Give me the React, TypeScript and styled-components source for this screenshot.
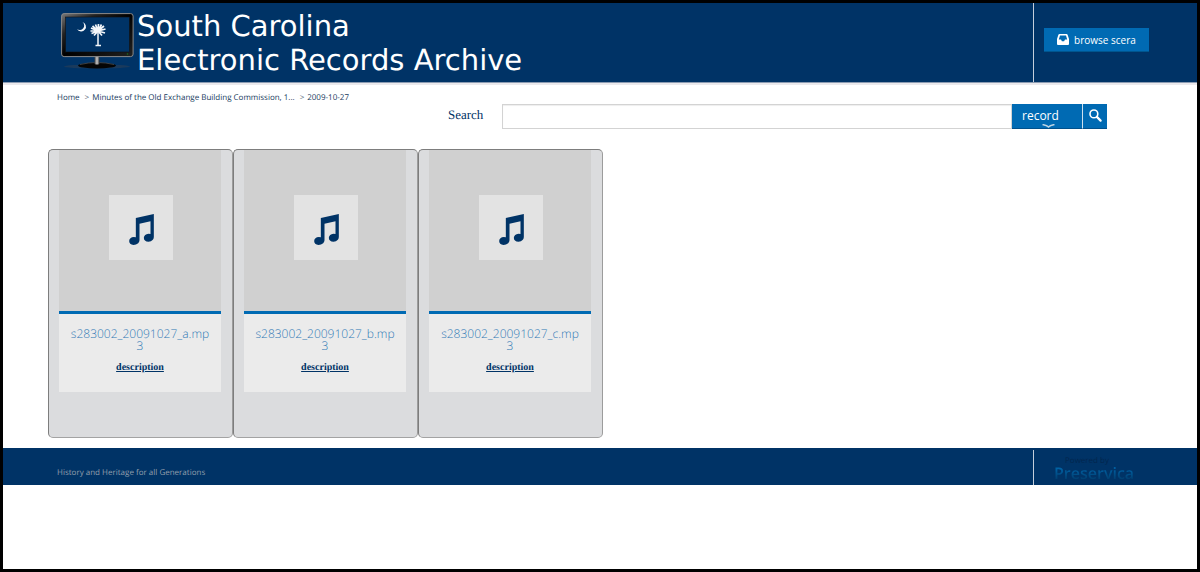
import React from "react";
import styled, { createGlobalStyle } from "styled-components";

const navy = "#003366";
const blue = "#006ab3";
const sans = '"Open Sans", "Noto Sans", sans-serif';
const serif = '"Liberation Serif", serif';

const GlobalStyle = createGlobalStyle`
  * { box-sizing: border-box; }
  body {
    margin: 0;
    background: #fff;
    font-family: ${sans};
    color: ${navy};
    text-rendering: geometricPrecision;
  }
`;

const Page = styled.div`
  min-height: 100vh;
  border: 3px solid #000;
  background: #fff;
`;

const Header = styled.header`
  display: flex;
  height: 80px;
  background: ${navy};
  border-bottom: 1px solid #8c9cb2;
  box-shadow: 0 2px 0 #ebe9ec;
`;

const Brand = styled.a`
  flex: 1;
  display: flex;
  align-items: flex-start;
  gap: 2px;
  padding: 5px 0 0 57px;
  color: #fff;
  text-decoration: none;
`;

const Title = styled.h1`
  margin: 1px 0 0;
  font: 400 29px/34px "DejaVu Sans", sans-serif;
`;

const Side = styled.div`
  width: 164px;
  padding: 25px 0 0 10px;
  border-left: 1px solid #c3cedb;
`;

const BrowseButton = styled.button`
  display: flex;
  align-items: center;
  justify-content: center;
  gap: 5px;
  width: 105px;
  height: 24px;
  padding: 0;
  border: 0;
  border-bottom: 1px solid #00568f;
  background: ${blue};
  color: #fff;
  font: 400 10px/16px ${sans};
`;

const Main = styled.main`
  padding: 9px 90px 10px 45px;
`;

const Toolbar = styled.div`
  display: flex;
  align-items: flex-start;
  padding-left: 9px;
`;

const Crumbs = styled.nav`
  flex: 0 0 391px;
  ol {
    display: flex;
    margin: 0;
    padding: 0;
    list-style: none;
    font-size: 8px;
    line-height: 12px;
    white-space: nowrap;
  }
  li + li::before {
    content: ">";
    margin: 0 3px 0 5px;
    color: #5b6b7d;
  }
  a { color: #16395c; text-decoration: none; }
`;

const SearchForm = styled.form`
  flex: 1;
  display: flex;
  height: 25px;
  margin-top: 12px;
`;

const SearchLabel = styled.label`
  width: 54px;
  font: 400 13px/22px ${serif};
`;

const SearchInput = styled.input`
  flex: 1;
  min-width: 0;
  padding: 0 8px;
  border: 1px solid #d3d3d3;
  border-radius: 0;
  background: #fff;
  box-shadow: inset 0 1px 1px #eee;
  font: 400 12px/16px ${sans};
  outline: 0;
`;

const SelectWrap = styled.div`
  position: relative;
  width: 70px;
  svg { position: absolute; left: 30px; bottom: 1px; pointer-events: none; }
`;

const TypeSelect = styled.select`
  appearance: none;
  display: block;
  width: 100%;
  height: 100%;
  padding: 0 10px;
  border: 0;
  border-radius: 0;
  border-bottom: 1px solid #00508c;
  background: ${blue};
  color: #fff;
  font: 400 12px/20px ${sans};
`;

const SearchButton = styled.button`
  display: flex;
  align-items: center;
  justify-content: center;
  width: 25px;
  padding: 0 0 2px;
  border: 0;
  border-left: 1px solid #cfe0ee;
  border-bottom: 1px solid #00508c;
  background: ${blue};
`;

const Records = styled.ul`
  display: flex;
  flex-wrap: wrap;
  margin: 20px 0 0;
  padding: 0;
  list-style: none;
`;

const Card = styled.li`
  width: 185px;
  height: 289px;
  padding: 0 11px 0 10px;
  border: 1px solid;
  border-color: #7d7d7d #9c9c9c #a3a3a3 #7d7d7d;
  border-radius: 5px;
  background: #dbdcde;
`;

const Preview = styled.div`
  display: flex;
  justify-content: center;
  height: 164px;
  padding: 45px 0 0 2px;
  border-bottom: 3px solid ${blue};
  background: #d0d0d0;
`;

const Tile = styled.div`
  display: flex;
  justify-content: center;
  width: 64px;
  height: 65px;
  padding-top: 19px;
  background: #e3e3e3;
`;

const Details = styled.div`
  display: flex;
  flex-direction: column;
  align-items: center;
  height: 78px;
  padding: 14px 10px 0;
  background: #ebebeb;
  text-align: center;
`;

const RecordLink = styled.a`
  color: #2f79b5;
  font-size: 12px;
  font-weight: 300;
  line-height: 12px;
  text-decoration: none;
  word-break: break-all;
`;

const DescriptionLink = styled.a`
  margin-top: 10px;
  color: ${navy};
  font: 700 10px/12px ${serif};
`;

const Footer = styled.footer`
  display: flex;
  height: 37px;
  background: ${navy};
`;

const Motto = styled.p`
  flex: 1;
  margin: 0;
  padding: 19px 0 0 54px;
  color: #929fac;
  font-size: 8px;
  line-height: 12px;
`;

const Powered = styled.div`
  display: flex;
  flex-direction: column;
  width: 164px;
  margin-top: 2px;
  padding: 8px 0 0 20px;
  border-left: 1px solid #c3cedb;
`;

const PoweredBy = styled.span`
  padding-left: 11px;
  color: #02264e;
  font-size: 8px;
  line-height: 6px;
`;

const Vendor = styled.span`
  align-self: flex-start;
  background: linear-gradient(#0064a8 20%, #003c6c 90%);
  background-clip: text;
  color: transparent;
  font-size: 16px;
  font-weight: 600;
  line-height: 18px;
`;

const MonitorLogo = () => (
  <svg width="75" height="66" viewBox="0 0 75 66" aria-hidden="true">
    <defs>
      <linearGradient id="bezel" x1="0" y1="0" x2="1" y2="1">
        <stop offset="0" stopColor="#777" />
        <stop offset="0.25" stopColor="#222" />
        <stop offset="0.5" stopColor="#000" />
        <stop offset="1" stopColor="#222" />
      </linearGradient>
      <linearGradient id="neck" x1="0" x2="1">
        <stop offset="0" stopColor="#444" />
        <stop offset="0.5" stopColor="#ccc" />
        <stop offset="1" stopColor="#333" />
      </linearGradient>
    </defs>
    <ellipse cx="37" cy="58.5" rx="33" ry="2" fill="#1a3a5c" />
    <ellipse cx="37" cy="57.5" rx="19" ry="3" fill="#050505" />
    <path d="M20 56.500q17 -4 34 0" fill="none" stroke="#555" strokeWidth="0.7" />
    <path d="M34.5 48h5v8q-2.500 1 -5 0z" fill="url(#neck)" />
    <rect x="1.600" y="5.600" width="71.500" height="43" rx="2.500" fill="url(#bezel)" stroke="#8a8a8a" />
    <rect x="5.500" y="9" width="64" height="35" fill={navy} stroke="#111" strokeWidth="0.6" />
    <circle cx="67.500" cy="46" r="0.800" fill="#19701c" />
    <path d="M22.500 14a4.800 4.800 0 1 1 -5.500 7a4.300 4.300 0 0 0 5.500 -7z" fill="#f4f7fa" />
    <g stroke="#f4f7fa" fill="none">
      <path d="M38 22V37M35.500 37.500h5.500" strokeWidth="1.500" />
      <path
        d="M38 23L31 20M38 23L32.500 18M38 23L35.500 16.500M38 23L38.500 16M38 23L41.500 16.500M38 23L44 18M38 23L45.500 21M38 23L45 25M38 23L42 27.500M38 23L34 27.500M38 23L31.500 25.500M38 23L30.500 23"
        strokeWidth="1.700"
      />
    </g>
  </svg>
);

const InboxIcon = () => (
  <svg width="12" height="11" viewBox="0 0 12 11" aria-hidden="true">
    <path
      fillRule="evenodd"
      fill="#fff"
      d="M2.500 0h7q0.800 0 1.100 0.800L12 5v5q0 1 -1 1H1q-1 0 -1 -1V5L1.400 0.800Q1.700 0 2.500 0zM3 1.600L1.800 5.400H4l0.900 1.900h2.200l0.900 -1.900h2.200L9 1.600z"
    />
  </svg>
);

const SearchIcon = () => (
  <svg width="13" height="13" viewBox="0 0 13 13" aria-hidden="true" fill="none" stroke="#fff">
    <circle cx="4.900" cy="4.900" r="3.900" strokeWidth="1.600" />
    <path d="M7.900 7.900L11.600 11.600" strokeWidth="2.200" strokeLinecap="round" />
  </svg>
);

const Chevron = () => (
  <svg width="13" height="4" viewBox="0 0 13 4" aria-hidden="true">
    <path d="M0.500 0.500Q5 1.500 6.500 3Q8 1.500 12.500 0.500" fill="none" stroke="#bcd3e3" strokeWidth="1.500" />
  </svg>
);

const MusicIcon = () => (
  <svg width="25" height="31" viewBox="0 0 74 93" aria-hidden="true" fill={navy}>
    <path d="M20 12L74 0V69Q74 74 71 77Q66 83 58 83Q44 82 44 71Q45 60 58 59Q61 59 64 60V22L31 29V79Q31 84 27 88Q21 93 13 93Q0 92 0 81Q1 70 14 69Q17 69 20 70Z" />
  </svg>
);

const records = ["s283002_20091027_a.mp3", "s283002_20091027_b.mp3", "s283002_20091027_c.mp3"];

export default function App() {
  return (
    <>
      <GlobalStyle />
      <Page>
        <Header>
          <Brand href="#">
            <MonitorLogo />
            <Title>
              South Carolina
              <br />
              Electronic Records Archive
            </Title>
          </Brand>
          <Side>
            <BrowseButton type="button">
              <InboxIcon />
              browse scera
            </BrowseButton>
          </Side>
        </Header>
        <Main>
          <Toolbar>
            <Crumbs aria-label="Breadcrumb">
              <ol>
                <li><a href="#">Home</a></li>
                <li><a href="#">Minutes of the Old Exchange Building Commission, 1...</a></li>
                <li><a href="#">2009-10-27</a></li>
              </ol>
            </Crumbs>
            <SearchForm role="search" onSubmit={(e) => e.preventDefault()}>
              <SearchLabel htmlFor="query">Search</SearchLabel>
              <SearchInput id="query" type="text" />
              <SelectWrap>
                <TypeSelect aria-label="Search in" defaultValue="record">
                  <option value="record">record</option>
                </TypeSelect>
                <Chevron />
              </SelectWrap>
              <SearchButton type="submit" aria-label="Search">
                <SearchIcon />
              </SearchButton>
            </SearchForm>
          </Toolbar>
          <Records>
            {records.map((name) => (
              <Card key={name}>
                <Preview>
                  <Tile>
                    <MusicIcon />
                  </Tile>
                </Preview>
                <Details>
                  <RecordLink href="#">{name}</RecordLink>
                  <DescriptionLink href="#">description</DescriptionLink>
                </Details>
              </Card>
            ))}
          </Records>
        </Main>
        <Footer>
          <Motto>History and Heritage for all Generations</Motto>
          <Powered>
            <PoweredBy>Powered by</PoweredBy>
            <Vendor>Preservica</Vendor>
          </Powered>
        </Footer>
      </Page>
    </>
  );
}
